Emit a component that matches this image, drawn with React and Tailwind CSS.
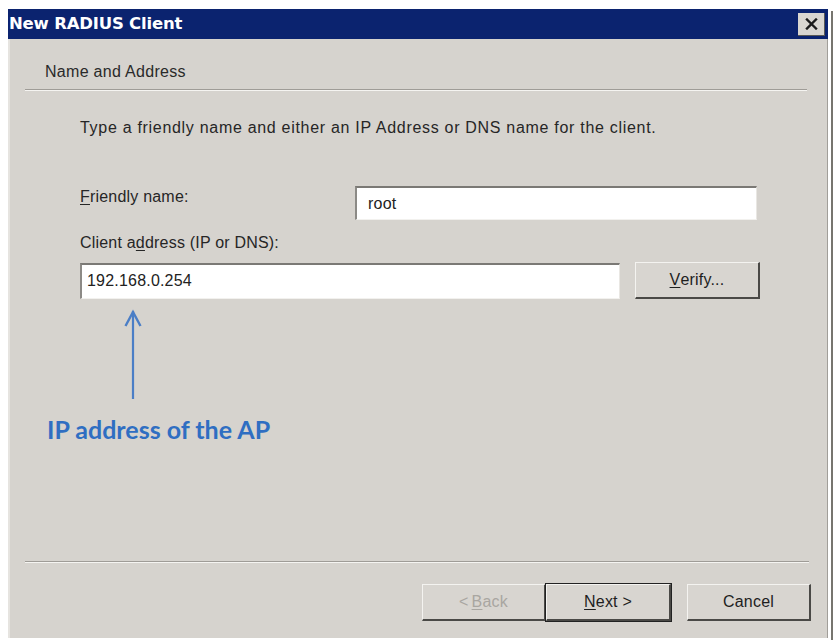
import React from 'react';

const ui = { fontFamily: '"Liberation Sans", Arial, sans-serif' };

function Sunken({ value, className }) {
  return (
    <div
      className={`bg-white border-t-2 border-l-2 border-t-[#7b7975] border-l-[#8c8a86] border-b border-r border-b-[#f2f1ee] border-r-[#e9e7e3] flex items-center text-[16px] tracking-[0.2px] text-[#222] ${className}`}
    >
      {value}
    </div>
  );
}

function Button({ children, def, disabled, className = '' }) {
  return (
    <div
      className={`h-[37px] flex items-center justify-center text-[16px] tracking-[0.2px] bg-[#d8d5d0] border-t border-l border-t-[#f4f3f0] border-l-[#f4f3f0] border-b-2 border-r-2 border-b-[#4a4946] border-r-[#4a4946] ${def ? 'outline outline-1 outline-[#222]' : ''} ${disabled ? 'text-[#a9a6a1]' : 'text-[#1e1e1e]'} ${className}`}
    >
      {children}
    </div>
  );
}

export default function App() {
  return (
    <div className="w-[835px] h-[640px] bg-white flex pt-[9px] pl-[8px] overflow-hidden" style={ui}>
      <div className="w-[820px] h-[629px] flex flex-col bg-[#d6d3ce] border-l-2 border-l-[#e6e4e0] border-r border-r-[#a19e99]">
        {/* title bar */}
        <div className="h-[30px] bg-[#0b236f] flex items-center justify-between pl-[1px] pr-[3px] -ml-[2px] -mr-[1px]">
          <span className="text-white font-bold text-[16.5px] tracking-[-0.2px]" style={{ fontFamily: '"DejaVu Sans", Verdana, sans-serif' }}>
            New RADIUS Client
          </span>
          <div className="w-[27px] h-[23px] bg-[#d9d6d1] border-b border-r border-[#5a5956] flex items-center justify-center">
            <svg width="13" height="12" viewBox="0 0 13 12">
              <path d="M2 1.5 L11 10.5 M11 1.5 L2 10.5" stroke="#1a1a1a" strokeWidth="2.4" strokeLinecap="square" />
            </svg>
          </div>
        </div>

        {/* header */}
        <div className="pt-[23px] pl-[35px] text-[16px] tracking-[0.3px] leading-[20px] text-[#2a2a2a]">Name and Address</div>
        <div className="mt-[7px] ml-[15px] mr-[20px] border-t border-t-[#9f9c97] border-b border-b-[#f5f4f1]" />

        {/* content */}
        <div className="pl-[70px] flex flex-col text-[16px] tracking-[0.2px] leading-[20px] text-[#262626]">
          <div className="mt-[27px] tracking-[0.7px]">
            Type a friendly name and either an IP Address or DNS name for the client.
          </div>

          <div className="mt-[48px] flex items-start">
            <div className="w-[275px] mt-[1px]">
              <span className="underline underline-offset-2">F</span>riendly name:
            </div>
            <Sunken value="root" className="w-[402px] h-[34px] pl-[11px]" />
          </div>

          <div className="mt-[13px]">
            Client a<span className="underline underline-offset-2">d</span>dress (IP or DNS):
          </div>

          <div className="mt-[9px] flex items-center gap-[15px]">
            <Sunken value="192.168.0.254" className="w-[540px] h-[36px] pl-[5px]" />
            <Button className="w-[125px] h-[36px]">
              <span className="underline underline-offset-2">V</span>erify...
            </Button>
          </div>

          <svg className="mt-[10px] ml-[43px]" width="20" height="91" viewBox="0 0 20 91">
            <path d="M10 2 L10 90" stroke="#4b7ec6" strokeWidth="2.2" />
            <path d="M2.5 17 L10 3 L17.5 17" fill="none" stroke="#4b7ec6" strokeWidth="2.4" strokeLinejoin="miter" />
          </svg>
        </div>

        <div
          className="mt-[14px] pl-[37px] text-[25px] leading-[30px] font-bold text-[#2f6ec2]"
          style={{ fontFamily: 'Lato, "Open Sans", sans-serif' }}
        >
          IP address of the AP
        </div>

        <div className="flex-1" />

        {/* footer */}
        <div className="ml-[15px] mr-[18px] border-t border-t-[#9f9c97] border-b border-b-[#f5f4f1]" />
        <div className="mt-[21px] mb-[17px] flex justify-end pr-[16px]">
          <Button disabled className="w-[124px]">
            &lt; <span className="underline underline-offset-2 ml-[3px]">B</span>ack
          </Button>
          <Button def className="w-[125px]">
            <span className="underline underline-offset-2">N</span>ext &gt;
          </Button>
          <Button className="w-[124px] ml-[16px]">Cancel</Button>
        </div>
      </div>
      <div className="mt-[2px] ml-[3px] w-[2px] h-[631px] bg-[#77756f]" />
    </div>
  );
}
